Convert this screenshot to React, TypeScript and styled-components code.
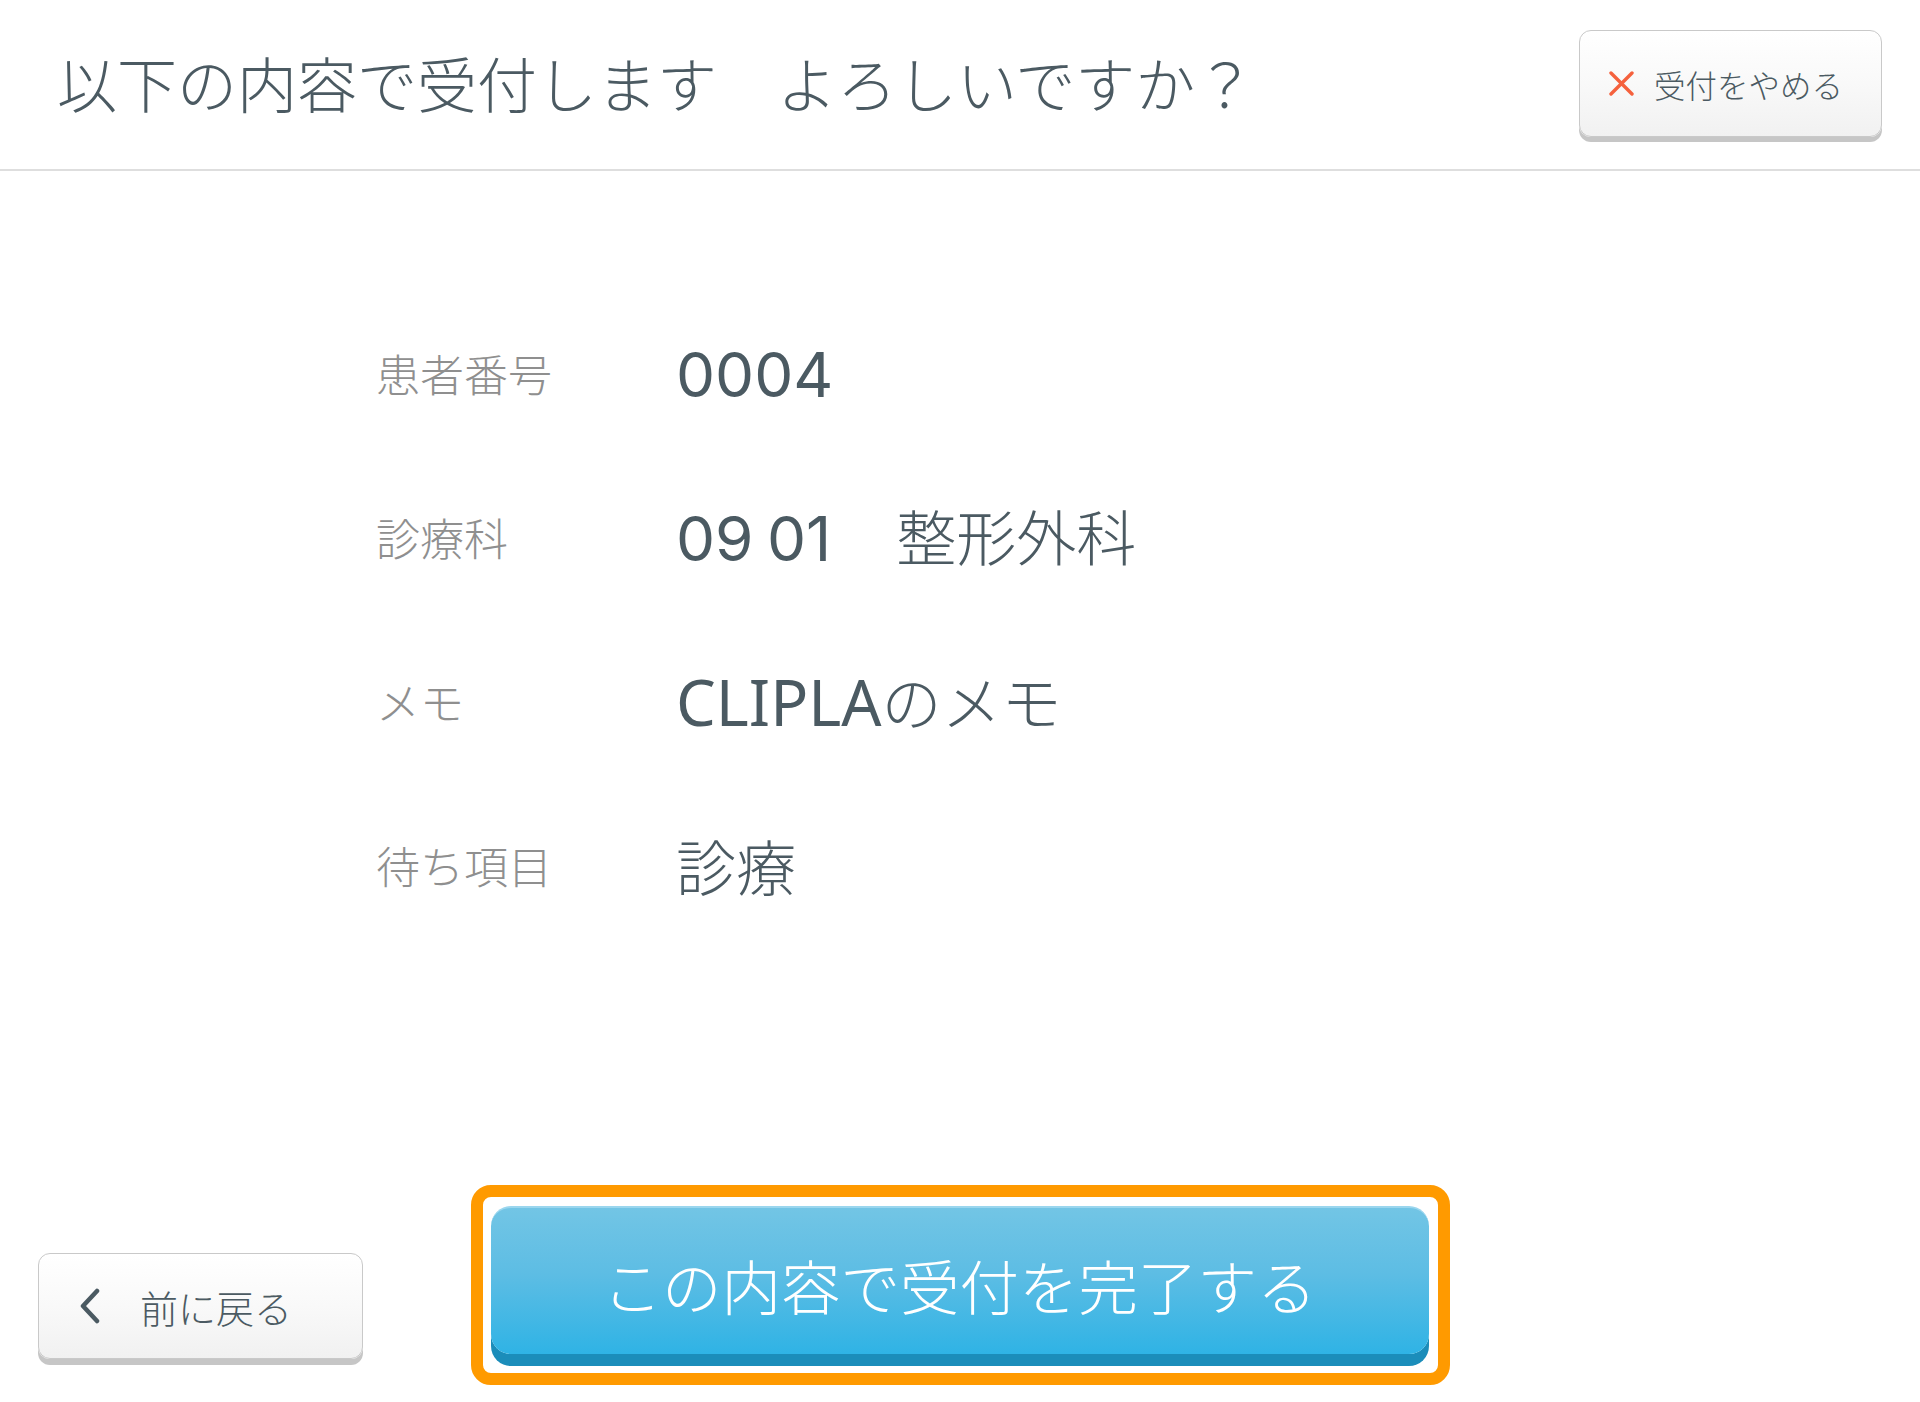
import React from 'react'
import styled, { createGlobalStyle } from 'styled-components'

const GlobalStyle = createGlobalStyle`
  html, body {
    margin: 0;
    padding: 0;
    background: #ffffff;
  }
  body {
    font-family: "Noto Sans CJK JP", "Noto Sans", sans-serif;
    color: #4b5a62;
  }
`

const Page = styled.div`
  display: flex;
  flex-direction: column;
  min-height: 100vh;
  width: 100%;
`

const Header = styled.header`
  display: flex;
  align-items: center;
  justify-content: space-between;
  height: 171px;
  padding: 0 38px 0 57px;
  border-bottom: 2px solid #dedede;
  box-sizing: border-box;
`

const Title = styled.h1`
  margin: 0;
  font-size: 60px;
  font-weight: 300;
  line-height: 1;
  color: #4b5a62;
  padding-bottom: 6px;
`

const GhostButton = styled.button<{ $width: number; $height: number }>`
  display: flex;
  align-items: center;
  width: ${p => p.$width}px;
  height: ${p => p.$height}px;
  box-sizing: border-box;
  border: 1px solid #c9c9c9;
  border-radius: 12px;
  background: linear-gradient(180deg, #ffffff 0%, #f9f9f9 50%, #f1f1f1 100%);
  box-shadow: 0 5px 0 #c6c6c6;
  font-family: "Noto Sans CJK JP", sans-serif;
  font-weight: 300;
  color: #4b5a62;
  cursor: pointer;
`

const CancelButton = styled(GhostButton)`
  margin-top: -2px;
  padding: 0 0 0 29px;
  gap: 20px;
  font-size: 31.5px;
`

const BackButton = styled(GhostButton)`
  padding: 0 0 0 41px;
  gap: 40px;
  font-size: 38px;
  box-shadow: 0 6px 0 #c6c6c6;
  justify-self: start;
  align-self: end;
  margin-bottom: 26px;
`

const Main = styled.main`
  flex: 1;
  padding: 120px 0 0 376px;
`

const Row = styled.div`
  display: flex;
  align-items: center;
  height: 164px;
`

const Label = styled.div`
  width: 300px;
  font-size: 44px;
  font-weight: 300;
  color: #8f8f8f;
  line-height: 1;
`

const Value = styled.div`
  font-family: "Noto Sans CJK JP", sans-serif;
  font-size: 60px;
  font-weight: 300;
  color: #4b5a62;
  line-height: 1;
`

const Latin = styled.span`
  font-family: "Noto Sans", sans-serif;
  font-size: 63px;
  font-weight: 400;
`

const Digits = styled.span`
  font-family: Inter, "Noto Sans", sans-serif;
  font-size: 62px;
  font-weight: 400;
  word-spacing: -4px;
  margin-right: 5px;
`

const Footer = styled.footer`
  display: grid;
  grid-template-columns: 1fr auto 1fr;
  padding: 0 38px 17px;
`

const FocusRing = styled.div`
  border: 12px solid #ff9a00;
  border-radius: 20px;
  background: #ffffff;
  padding: 9px 9px 19px 8px;
`

const ConfirmButton = styled.button`
  display: flex;
  align-items: center;
  justify-content: center;
  width: 938px;
  height: 148px;
  padding: 6px 0 0;
  border: none;
  border-top: 2px solid #9ad6ee;
  border-radius: 20px;
  background: linear-gradient(180deg, #72c5e5 0%, #5dbde4 45%, #2fb3e5 100%);
  box-shadow: 0 12px 0 #1b8dba;
  color: #ffffff;
  font-family: "Noto Sans CJK JP", sans-serif;
  font-size: 59.5px;
  font-weight: 300;
  cursor: pointer;
`

const rows = [
  { label: '患者番号', value: '0004' },
  { label: '診療科', value: '09 01　整形外科' },
  { label: 'メモ', value: 'CLIPLAのメモ' },
  { label: '待ち項目', value: '診療' },
]

// digit runs and latin runs get their own faces so they read as wide as the kiosk font
function renderValue(text: string) {
  return text.split(/([A-Za-z0-9 ]+)/).map((part, i) => {
    if (!part) return null
    if (/^[\d ]+$/.test(part)) return <Digits key={i}>{part}</Digits>
    if (/[A-Za-z]/.test(part)) return <Latin key={i}>{part}</Latin>
    return <span key={i}>{part}</span>
  })
}

export default function App() {
  return (
    <Page>
      <GlobalStyle />
      <Header>
        <Title>以下の内容で受付します　よろしいですか？</Title>
        <CancelButton $width={303} $height={107}>
          <svg width="25" height="25" viewBox="0 0 25 25">
            <path d="M2 2 L23 23 M23 2 L2 23" stroke="#f5613d" strokeWidth="3.4" strokeLinecap="round" />
          </svg>
          <span>受付をやめる</span>
        </CancelButton>
      </Header>
      <Main>
        {rows.map(r => (
          <Row key={r.label}>
            <Label>{r.label}</Label>
            <Value>{renderValue(r.value)}</Value>
          </Row>
        ))}
      </Main>
      <Footer>
        <BackButton $width={325} $height={106}>
          <svg width="20" height="36" viewBox="0 0 20 36">
            <path d="M17 3 L3 18 L17 33" fill="none" stroke="#4b5a62" strokeWidth="4.5" strokeLinecap="round" strokeLinejoin="round" />
          </svg>
          <span>前に戻る</span>
        </BackButton>
        <FocusRing>
          <ConfirmButton>この内容で受付を完了する</ConfirmButton>
        </FocusRing>
        <div />
      </Footer>
    </Page>
  )
}
